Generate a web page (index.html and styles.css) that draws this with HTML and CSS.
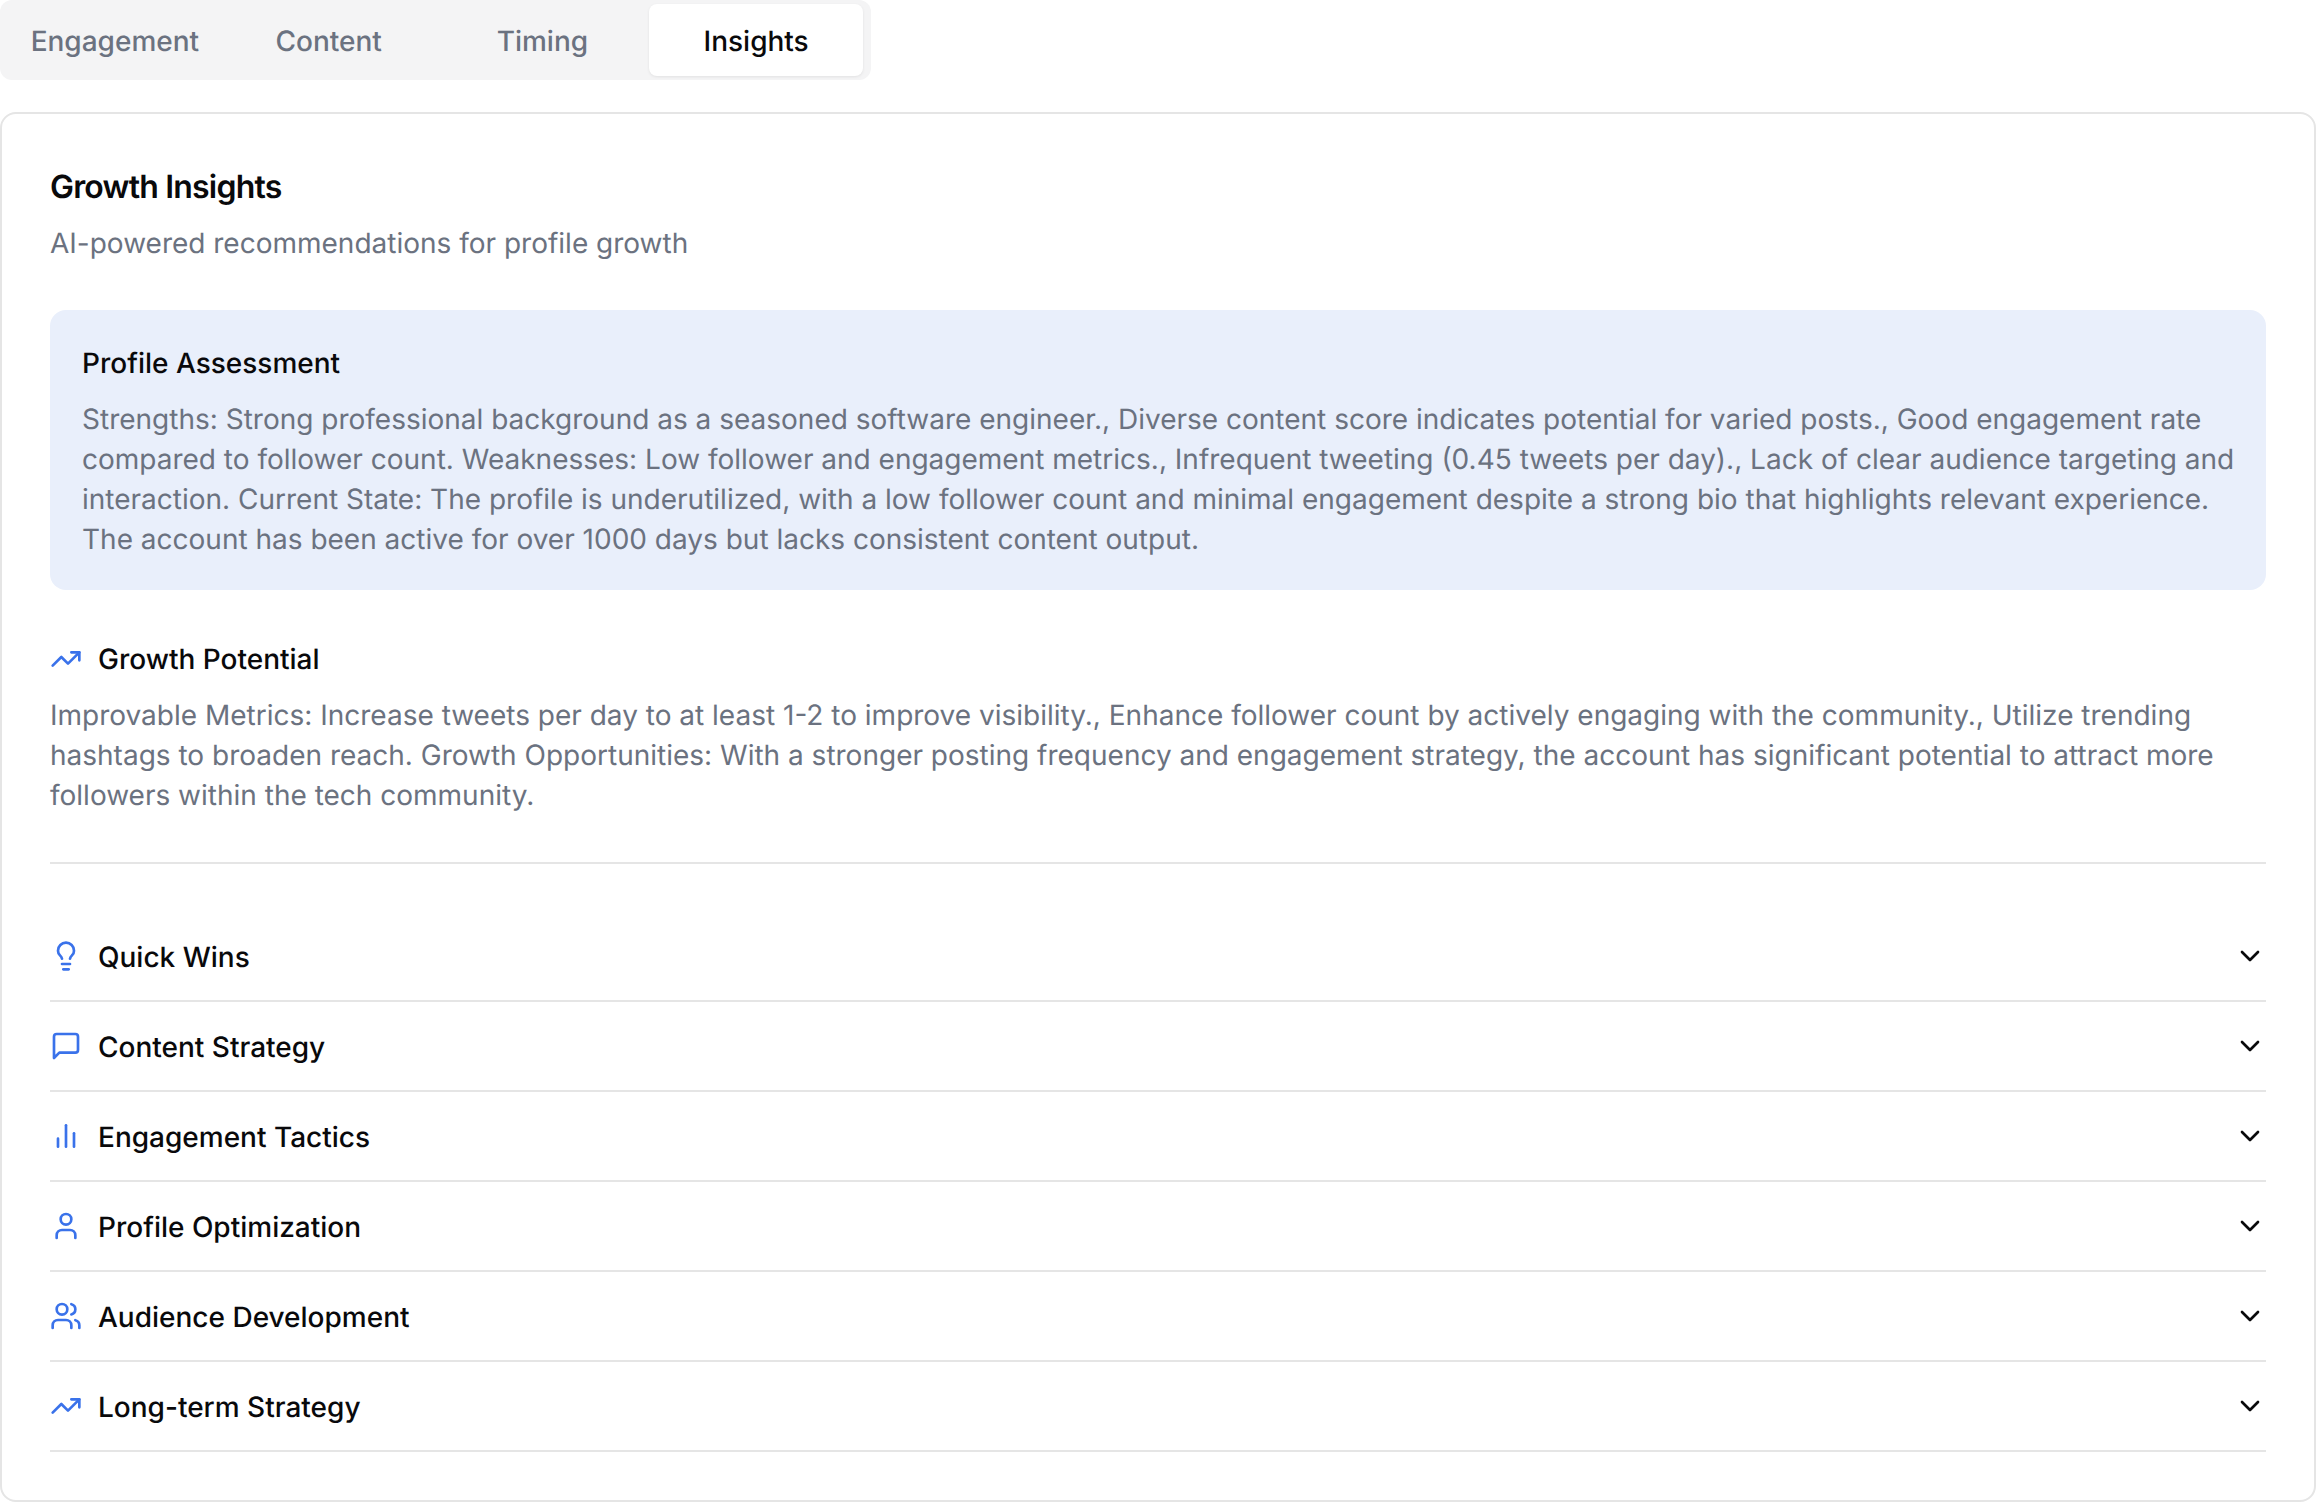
FILE: index.html
```html
<!DOCTYPE html>
<html lang="en">
<head>
<meta charset="utf-8">
<title>Growth Insights</title>
<link rel="stylesheet" href="styles.css">
</head>
<body>
<div class="tabs">
  <div class="tab">Engagement</div>
  <div class="tab">Content</div>
  <div class="tab">Timing</div>
  <div class="tab active">Insights</div>
</div>
<main class="card">
  <h1 class="title">Growth Insights</h1>
  <p class="subtitle">AI-powered recommendations for profile growth</p>
  <section class="assessment">
    <h2 class="assessment-title">Profile Assessment</h2>
    <p class="body-text">Strengths: Strong professional background as a seasoned software engineer., Diverse content score indicates potential for varied posts., Good engagement rate compared to follower count. Weaknesses: Low follower and engagement metrics., Infrequent tweeting (0.45 tweets per day)., Lack of clear audience targeting and interaction. Current State: The profile is underutilized, with a low follower count and minimal engagement despite a strong bio that highlights relevant experience. The account has been active for over 1000 days but lacks consistent content output.</p>
  </section>
  <section class="potential">
    <h2 class="potential-title">
      <svg class="icon blue" viewBox="0 0 24 24"><polyline points="22 7 13.5 15.5 8.5 10.5 2 17"/><polyline points="16 7 22 7 22 13"/></svg>
      Growth Potential
    </h2>
    <p class="body-text">Improvable Metrics: Increase tweets per day to at least 1-2 to improve visibility., Enhance follower count by actively engaging with the community., Utilize trending hashtags to broaden reach. Growth Opportunities: With a stronger posting frequency and engagement strategy, the account has significant potential to attract more followers within the tech community.</p>
  </section>
  <div class="accordion">
    <div class="row">
      <svg class="icon blue" viewBox="0 0 24 24"><path d="M15 14c.2-1 .7-1.7 1.5-2.5 1-.9 1.5-2.2 1.5-3.5A6 6 0 0 0 6 8c0 1 .2 2.2 1.5 3.5.7.7 1.3 1.5 1.5 2.5"/><path d="M9 18h6"/><path d="M10 22h4"/></svg>
      <span class="row-label">Quick Wins</span>
      <svg class="icon chevron" viewBox="0 0 24 24"><path d="m6 9 6 6 6-6"/></svg>
    </div>
    <div class="row">
      <svg class="icon blue" viewBox="0 0 24 24"><path d="M21 15a2 2 0 0 1-2 2H7l-4 4V5a2 2 0 0 1 2-2h14a2 2 0 0 1 2 2z"/></svg>
      <span class="row-label">Content Strategy</span>
      <svg class="icon chevron" viewBox="0 0 24 24"><path d="m6 9 6 6 6-6"/></svg>
    </div>
    <div class="row">
      <svg class="icon blue" viewBox="0 0 24 24"><path d="M18 20V10"/><path d="M12 20V4"/><path d="M6 20v-6"/></svg>
      <span class="row-label">Engagement Tactics</span>
      <svg class="icon chevron" viewBox="0 0 24 24"><path d="m6 9 6 6 6-6"/></svg>
    </div>
    <div class="row">
      <svg class="icon blue" viewBox="0 0 24 24"><path d="M19 21v-2a4 4 0 0 0-4-4H9a4 4 0 0 0-4 4v2"/><circle cx="12" cy="7" r="4"/></svg>
      <span class="row-label">Profile Optimization</span>
      <svg class="icon chevron" viewBox="0 0 24 24"><path d="m6 9 6 6 6-6"/></svg>
    </div>
    <div class="row">
      <svg class="icon blue" viewBox="0 0 24 24"><path d="M16 21v-2a4 4 0 0 0-4-4H6a4 4 0 0 0-4 4v2"/><circle cx="9" cy="7" r="4"/><path d="M22 21v-2a4 4 0 0 0-3-3.87"/><path d="M16 3.13a4 4 0 0 1 0 7.75"/></svg>
      <span class="row-label">Audience Development</span>
      <svg class="icon chevron" viewBox="0 0 24 24"><path d="m6 9 6 6 6-6"/></svg>
    </div>
    <div class="row">
      <svg class="icon blue" viewBox="0 0 24 24"><polyline points="22 7 13.5 15.5 8.5 10.5 2 17"/><polyline points="16 7 22 7 22 13"/></svg>
      <span class="row-label">Long-term Strategy</span>
      <svg class="icon chevron" viewBox="0 0 24 24"><path d="m6 9 6 6 6-6"/></svg>
    </div>
  </div>
</main>
</body>
</html>
```

FILE: styles.css
```css
* { box-sizing: border-box; }
html, body { margin: 0; padding: 0; background: #fff; }
body {
  font-family: Inter, "Liberation Sans", sans-serif;
  color: #09090b;
  text-rendering: geometricPrecision;
  overflow: hidden;
}
.tabs {
  display: grid;
  grid-template-columns: repeat(4, 1fr);
  width: 871px;
  height: 80px;
  padding: 4px 8px;
  background: #f4f4f5;
  border-radius: 12px;
}
.tab {
  display: flex;
  align-items: center;
  justify-content: center;
  padding-top: 1px;
  font-size: 28px;
  font-weight: 500;
  color: #6b7280;
  border-radius: 8px;
}
.tab.active {
  background: #fff;
  color: #09090b;
  box-shadow: 0 1px 3px rgba(0, 0, 0, 0.08);
}
.card {
  margin-top: 32px;
  height: 1390px;
  padding: 49px 48px 48px;
  border: 2px solid #e5e5e5;
  border-radius: 16px;
  background: #fff;
}
.title {
  margin: 0;
  font-size: 32px;
  line-height: 48px;
  font-weight: 600;
  letter-spacing: -0.8px;
}
.subtitle {
  margin: 12px 0 0;
  font-size: 28px;
  line-height: 40px;
  color: #6b7280;
}
.assessment {
  margin-top: 47px;
  padding: 33px 30px 31px 32px;
  background: #e9effb;
  border-radius: 16px;
}
.assessment-title {
  margin: 0 0 16px;
  font-size: 28px;
  line-height: 40px;
  font-weight: 500;
}
.body-text {
  margin: 0;
  font-size: 28px;
  line-height: 40px;
  color: #6b7280;
}
.potential {
  margin-top: 49px;
  padding-bottom: 47px;
  border-bottom: 2px solid #e5e5e5;
}
.potential-title {
  display: flex;
  align-items: center;
  gap: 16px;
  margin: 0 0 16px;
  font-size: 28px;
  line-height: 40px;
  font-weight: 500;
}
.accordion { margin-top: 48px; }
.row {
  display: flex;
  align-items: center;
  gap: 16px;
  height: 90px;
  border-bottom: 2px solid #e5e5e5;
  font-size: 28px;
  font-weight: 500;
}
.row-label { flex: 1; padding-top: 2px; }
.icon {
  width: 32px;
  height: 32px;
  flex: none;
  fill: none;
  stroke: currentColor;
  stroke-width: 2;
  stroke-linecap: round;
  stroke-linejoin: round;
}
.blue { color: #3a72ea; }
.chevron { color: #09090b; }
```
